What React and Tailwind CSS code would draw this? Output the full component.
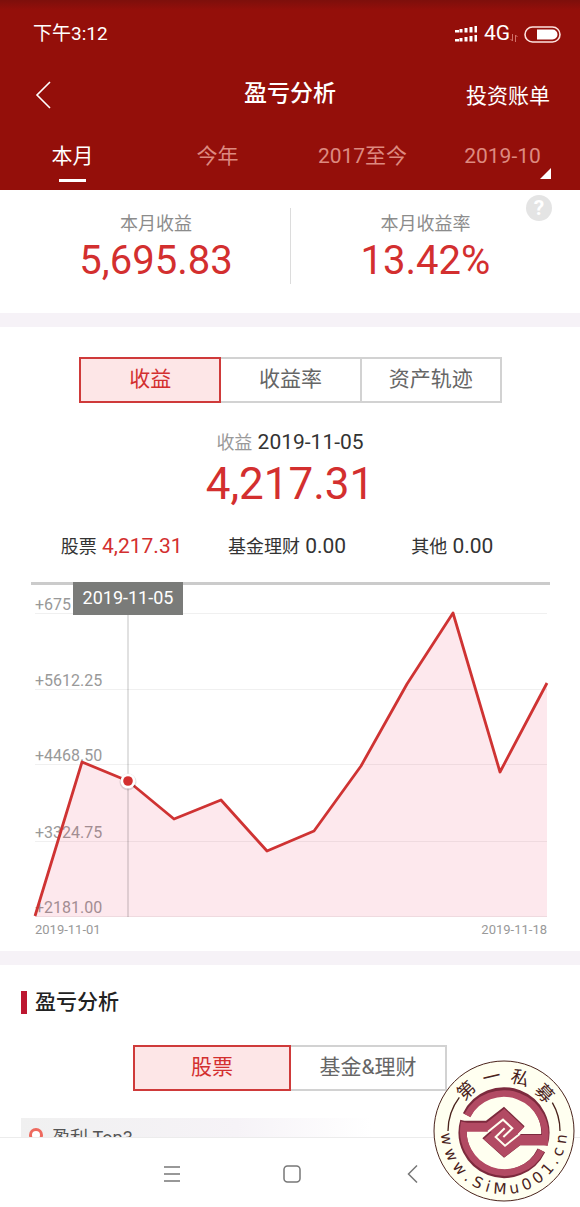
import { useState } from 'react';
import clsx from 'clsx';

const PERIODS = ['本月', '今年', '2017至今', '2019-10'];
const METRICS = ['收益', '收益率', '资产轨迹'];
const CATEGORIES = ['股票', '基金&理财'];

const BREAKDOWN = [
  { label: '股票', value: '4,217.31', up: true },
  { label: '基金理财', value: '0.00' },
  { label: '其他', value: '0.00' },
];

// chart coordinates, in the 519 x 336 viewBox
const POINTS = [
  [4, 334], [51, 180], [97, 199], [143, 237], [190, 218], [236, 269],
  [283, 249], [330, 184], [376, 102], [422, 31], [469, 190], [516, 101],
];
const GRID = [
  { y: 31, label: '+675' },
  { y: 107, label: '+5612.25' },
  { y: 182, label: '+4468.50' },
  { y: 259, label: '+3324.75' },
  { y: 334, label: '+2181.00' },
];

const SEAL_TOP = [['第', -43], ['一', -13], ['私', 17], ['募', 47]];
const SEAL_BOTTOM = [
  ['w', 82], ['w', 66], ['w', 50], ['.', 38], ['S', 27], ['i', 16], ['M', 4],
  ['u', -10], ['0', -23], ['0', -36], ['1', -49], ['.', -59], ['c', -69], ['n', -82],
];

function StatusBar() {
  return (
    <div className="flex h-[68px] items-center justify-between bg-linear-to-b from-[#7d0f0b] to-[#940f0a] to-15% pl-[33px] pr-[19px] text-[19px]">
      <span>下午3:12</span>
      <div className="flex items-center">
        <svg width="22" height="18" viewBox="0 0 22 18" fill="#fff" className="mr-[7px]">
          {[0, 1, 2, 3, 4].map((i) => (
            <g key={i}>
              <rect x={i * 5 - (i > 0 ? 0.5 : 0)} y={5 - i} width={i === 0 ? 4 : 3} height={2.5 + i} />
              <rect x={i * 5 - (i > 0 ? 0.5 : 0)} y={14 - i} width={i === 0 ? 4 : 3} height={2.5 + i} />
            </g>
          ))}
        </svg>
        <span className="text-[21px]">4G</span>
        <svg width="8" height="8" viewBox="0 0 8 8" fill="none" stroke="#d07068" className="mr-1.5 mt-2">
          <path d="M2.5 0v7M.5 5l2 2M5.500 8V1M7.500 3l-2-2" />
        </svg>
        <svg width="37" height="17" viewBox="0 0 37 17">
          <rect x="1" y="1" width="35" height="15" rx="7.5" fill="none" stroke="#fde3df" strokeWidth="1.6" />
          <path d="M13 3.5h15.500a5 5 0 0 1 0 10H13z" fill="#fff" />
        </svg>
      </div>
    </div>
  );
}

function Header({ period, onPeriod }) {
  return (
    <header className="bg-[#940f0a] text-white">
      <StatusBar />
      <div className="grid grid-cols-3 items-center px-[30px]">
        <button type="button" aria-label="返回" className="flex h-[54px] items-center pl-[5px]">
          <svg width="16" height="28" viewBox="0 0 16 28" fill="none" stroke="#fff" strokeWidth="1.6">
            <path d="M15 1 2 14l13 13" />
          </svg>
        </button>
        <h1 className="pb-0.5 text-center text-[23px] font-medium">盈亏分析</h1>
        <a href="#bill" className="pt-1 text-right text-[21px]">投资账单</a>
      </div>
      <nav className="grid h-[68px] grid-cols-4">
        {PERIODS.map((item, i) => (
          <button
            key={item}
            type="button"
            onClick={() => onPeriod(item)}
            className={clsx(
              'relative pt-0.5 text-[21px]',
              item === period ? 'text-white' : 'text-[#dd8a80]',
              i === 3 && 'pr-2.5'
            )}
          >
            {item}
            {item === period && <span className="absolute inset-x-0 bottom-2 mx-auto h-[3px] w-[27px] bg-white" />}
            {i === 3 && (
              <svg width="11" height="11" viewBox="0 0 11 11" fill="#fff" className="absolute bottom-[11px] right-[29px]">
                <path d="M11 0v11H0z" />
              </svg>
            )}
          </button>
        ))}
      </nav>
    </header>
  );
}

function Summary() {
  return (
    <section className="relative grid h-[123px] grid-cols-2 pl-[22px] pr-5 pt-[18px] text-center">
      <div className="h-[76px] border-r border-[#dcdcdc]">
        <p className="text-lg leading-8 text-[#8c8c8c]">本月收益</p>
        <p className="text-[40px] leading-[42px] text-[#d32f2f]">5,695.83</p>
      </div>
      <div>
        <p className="text-lg leading-8 text-[#8c8c8c]">本月收益率</p>
        <p className="text-[40px] leading-[42px] text-[#d32f2f]">13.42%</p>
      </div>
      <button
        type="button"
        aria-label="说明"
        className="absolute right-7 top-[5px] size-[26px] rounded-full bg-[#e4e4e4] text-[21px] font-bold leading-[26px] text-white"
      >
        ?
      </button>
    </section>
  );
}

function Segments({ items, value, onChange }) {
  return (
    <div className="flex h-[46px] text-[21px]">
      {items.map((item, i) => (
        <button
          key={item}
          type="button"
          onClick={() => onChange(item)}
          className={clsx(
            'flex-1 border-2',
            i > 0 && '-ml-0.5',
            item === value
              ? 'z-10 border-[#cf3a3a] bg-[#fde6e7] text-[#d32f2f]'
              : 'border-[#d2d2d2] text-[#666]'
          )}
        >
          {item}
        </button>
      ))}
    </div>
  );
}

function Chart() {
  const line = POINTS.map((p) => p.join(',')).join(' ');
  return (
    <div className="ml-[31px] mr-[30px]">
      <svg viewBox="0 0 519 336" className="block w-full" fontFamily="Roboto">
        <rect width="519" height="3" fill="#cbcbcb" />
        {GRID.map((g) => (
          <g key={g.label}>
            <path d={`M4 ${g.y + 0.5}h512`} stroke="#f0f0f0" />
            <text x="4" y={g.y - 3} fontSize="16" fill="#999">{g.label}</text>
          </g>
        ))}
        <polygon points={`4,335 ${line} 516,335`} fill="#f0305a" fillOpacity="0.11" />
        <path d="M97 33v302" stroke="#000" strokeOpacity="0.16" strokeWidth="1.5" />
        <polyline points={line} fill="none" stroke="#cf3333" strokeWidth="2.8" strokeLinejoin="round" />
        <circle cx="97" cy="200" r="8.5" fill="#000" fillOpacity="0.12" />
        <circle cx="97" cy="199" r="7.5" fill="#fff" />
        <circle cx="97" cy="199" r="4.8" fill="#d32f2f" />
        <rect x="42" width="110" height="33" fill="#7a7b79" />
        <text x="97" y="22" fontSize="18" fill="#fff" textAnchor="middle">2019-11-05</text>
      </svg>
      <div className="flex justify-between pl-1 pr-[3px] pt-0.5 text-[13px] leading-5 text-[#999]">
        <span>2019-11-01</span>
        <span>2019-11-18</span>
      </div>
    </div>
  );
}

function Seal() {
  return (
    <svg width="142" height="142" viewBox="-213 -213 426 426" className="absolute bottom-[5px] right-[5px] z-20">
      <circle r="210" fill="#fffff0" stroke="#4a231c" strokeWidth="3" />
      <g fill="none" stroke="#4a231c" strokeWidth="4">
        <path d="M-168 0A168 168 0 0 1-134-101" />
        <path d="M168 0A168 168 0 0 0 145-85" />
      </g>
      <g transform="translate(0 5)">
        <g fill="none" stroke="#7c2a3d" strokeWidth="25">
          <path d="M-112-53A124 124 0 0 1 119 35" />
          <path d="M112 53A124 124 0 0 1-119-35" />
        </g>
        <path fill="#7c2a3d" d="M-132-36h78L0-78l62 59-22 23h92v34H49L0 75l-65-58 25-23h-92z" />
        <g transform="translate(1 3)">
          <g fill="none" stroke="#b24a63" strokeWidth="20">
            <path d="M-111-54A124 124 0 0 1 119 34" />
            <path d="M111 50A124 124 0 0 1-120-34" />
          </g>
          <path fill="#b24a63" d="M-130-33h77L0-75l59 56-22 23h94v31H47L0 71l-62-54 25-23h-93z" />
        </g>
        <g fill="none" stroke="#fffff0" strokeWidth="6">
          <path d="M-48-3-3-39 25-13-2 13" />
          <path d="M48 3 3 39-25 13 2-13" />
        </g>
      </g>
      <g fill="#4a231c" textAnchor="middle">
        {SEAL_TOP.map(([char, angle]) => (
          <text key={char} y="-147" fontSize="54" fontFamily="Noto Sans CJK SC, sans-serif" transform={`rotate(${angle})`}>
            {char}
          </text>
        ))}
        {SEAL_BOTTOM.map(([char, angle], i) => (
          <text key={i} y="189" fontSize="46" fontFamily="DejaVu Sans, sans-serif" transform={`rotate(${angle})`}>
            {char}
          </text>
        ))}
      </g>
    </svg>
  );
}

function SystemNav() {
  return (
    <nav className="flex h-[70px] justify-center border-t border-[#ececec] bg-white pl-1 pt-0.5 text-[#777]">
      <button type="button" aria-label="菜单" className="flex w-[120px] items-center justify-center">
        <svg width="18" height="18" viewBox="0 0 18 18" stroke="currentColor" strokeWidth="1.5">
          <path d="M1 2h16M1 9h16M1 16h16" />
        </svg>
      </button>
      <button type="button" aria-label="主页" className="flex w-[120px] items-center justify-center">
        <svg width="18" height="18" viewBox="0 0 18 18" fill="none" stroke="currentColor" strokeWidth="1.5">
          <rect x="1" y="1" width="16" height="16" rx="3.5" />
        </svg>
      </button>
      <button type="button" aria-label="后退" className="flex w-[120px] items-center justify-center">
        <svg width="18" height="18" viewBox="0 0 18 18" fill="none" stroke="currentColor" strokeWidth="1.5">
          <path d="M14 .5 5.500 9l8.500 8.500" />
        </svg>
      </button>
    </nav>
  );
}

export default function App() {
  const [period, setPeriod] = useState('本月');
  const [metric, setMetric] = useState('收益');
  const [category, setCategory] = useState('股票');

  return (
    <div className="relative bg-white font-[Roboto,'Noto_Sans_CJK_SC',sans-serif]">
      <Header period={period} onPeriod={setPeriod} />
      <Summary />

      <section className="border-t-14 border-[#f6f2f7] pt-[30px]">
        <div className="pl-[79px] pr-[78px]">
          <Segments items={METRICS} value={metric} onChange={setMetric} />
        </div>
        <p className="mt-6 text-center text-[21px] leading-[30px] text-[#333]">
          <span className="text-lg text-[#999]">收益</span> 2019-11-05
        </p>
        <p className="text-center text-[44px] leading-[54px] text-[#d32f2f]">4,217.31</p>
        <div className="mt-5 grid grid-cols-3 pb-[21px] pl-[39px] pr-[45px] text-center text-[21px] leading-[30px]">
          {BREAKDOWN.map((item) => (
            <p key={item.label} className="whitespace-nowrap text-[#333]">
              <span className="text-lg">{item.label}</span>{' '}
              <span className={clsx(item.up && 'text-[#d32f2f]')}>{item.value}</span>
            </p>
          ))}
        </div>
        <Chart />
      </section>

      <section className="mt-[11px] border-t-14 border-[#f6f2f7] pt-[22px]">
        <h2 className="ml-[21px] flex items-center gap-2 text-[21px] font-medium leading-[30px] text-[#222]">
          <span className="h-[23px] w-1.5 bg-[#bd1731]" />
          盈亏分析
        </h2>
        <div className="mt-7 px-[133px]">
          <Segments items={CATEGORIES} value={category} onChange={setCategory} />
        </div>
        <div className="ml-[21px] mr-5 mt-[27px] h-[19px] overflow-hidden bg-linear-to-r from-[#f0f0f0] via-[#f6f3f7] via-40% to-white to-65%">
          <div className="flex h-10 items-center gap-2 pl-[7px] text-lg text-[#555]">
            <svg width="16" height="20" viewBox="0 0 16 20" fill="none">
              <path d="m3 13-2 6h5l2-3 2 3h5l-2-6" fill="#f3a49a" />
              <circle cx="8" cy="7" r="5.500" stroke="#ee6a5f" strokeWidth="3" fill="#fff" />
            </svg>
            盈利 Top3
          </div>
        </div>
      </section>

      <SystemNav />
      <Seal />
    </div>
  );
}
